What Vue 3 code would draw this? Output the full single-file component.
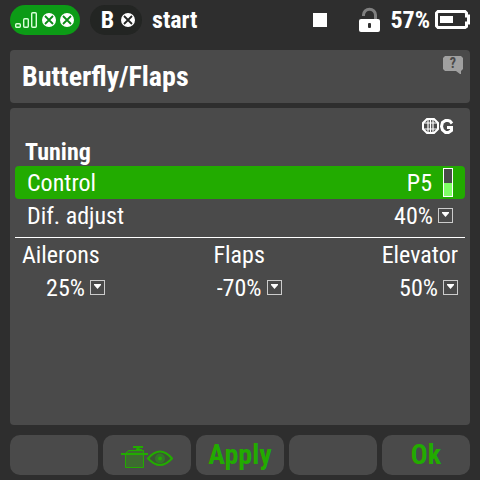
<script setup>
import { ref } from 'vue'

// Status bar values
const model = 'start'
const battery = '57%'

// Position of the P5 slider, in percent
const sliderLevel = ref(50)

// Differential adjustment
const difAdjust = ref('40%')

// One column per mixed function
const channels = ref([
  { id: 'ailerons', name: 'Ailerons', value: '25%' },
  { id: 'flaps', name: 'Flaps', value: '-70%' },
  { id: 'elevator', name: 'Elevator', value: '50%' }
])
</script>

<template>
  <div class="screen">
    <!-- Status bar -->
    <header class="status">
      <div class="pill link">
        <svg width="60" height="18" viewBox="0 0 60 18">
          <g fill="none" stroke="#d9ffd9" stroke-width="1.4">
            <rect x="0.7" y="12.7" width="4.6" height="3.6" rx="1" />
            <rect x="8.7" y="7.7" width="4.6" height="8.6" rx="1" />
            <rect x="16.7" y="1.7" width="4.6" height="14.6" rx="1" />
          </g>
          <g fill="#fff">
            <circle cx="34" cy="9" r="7" />
            <circle cx="52" cy="9" r="7" />
          </g>
          <path d="M30 5l8 8m0-8l-8 8M48 5l8 8m0-8l-8 8" stroke="#0c8b16" stroke-width="1.8" />
        </svg>
      </div>
      <div class="pill receiver">
        <span>B</span>
        <svg width="14" height="14" viewBox="0 0 14 14">
          <circle cx="7" cy="7" r="7" fill="#fff" />
          <path d="M3 3l8 8m0-8l-8 8" stroke="#232523" stroke-width="1.8" />
        </svg>
      </div>
      <span class="model">{{ model }}</span>
      <span class="stop"></span>
      <svg class="lock" width="22" height="26" viewBox="0 0 22 26">
        <path d="M4.5 9V8a6 5.8 0 0 1 12 0V13" fill="none" stroke="#808080" stroke-width="3" />
        <rect x="0" y="12" width="21" height="13" rx="2" fill="#fff" />
        <rect x="9" y="16" width="3" height="5" rx="1" fill="#2f2f2f" />
      </svg>
      <span class="battery-text">{{ battery }}</span>
      <svg width="35" height="20" viewBox="0 0 35 20">
        <path d="M3 1.5h27l1.5 1.500V6h2v7h-2v3.500L30 17.500H3L1.500 16V3z" fill="none" stroke="#fff" stroke-width="3" />
        <rect x="5" y="6" width="13" height="7" fill="#fff" />
      </svg>
    </header>

    <!-- Page title -->
    <section class="panel title">
      <h1>Butterfly/Flaps</h1>
      <button class="help" aria-label="Help">
        <svg width="20" height="18" viewBox="0 0 20 18">
          <path d="M2 0h16l2 2v11l-2 2v3h-1l-4-3H2l-2-2V2z" fill="#a0a0a0" />
          <text x="10" y="12" text-anchor="middle" class="mark">?</text>
        </svg>
      </button>
    </section>

    <!-- Settings -->
    <main class="panel settings">
      <div class="scope">
        <svg width="32" height="16" viewBox="0 0 32 16">
          <g fill="none" stroke="#fff">
            <path d="M5 1h7l4 4v6l-4 4H5l-4-4V5z" stroke-width="2" />
            <path d="M1 5h15M1 11h15M8.5 1v14M6 1v14M11 1v14" stroke-width="1.2" />
            <path d="M30 5.500L28 3L26 2.500H23.500L20.500 4.500L19.500 8.500L20.500 12L23.500 14.500H26.500L29.500 12.500V9.500H25" stroke-width="3" />
          </g>
        </svg>
      </div>
      <h2>Tuning</h2>
      <button class="row active">
        <span class="name">Control</span>
        <span class="value control-value">
          <span class="name">P5</span>
          <span class="slider"><span class="level" :style="{ height: sliderLevel + '%' }"></span></span>
        </span>
      </button>
      <div class="row">
        <label for="dif">Dif. adjust</label>
        <span class="value">
          <select id="dif" v-model="difAdjust">
            <option>{{ difAdjust }}</option>
          </select>
          <svg width="15" height="15" viewBox="0 0 15 15">
            <rect x="0.5" y="0.5" width="14" height="14" fill="none" stroke="#ccc" />
            <path d="M4 4h7v1l-3.5 4L4 5z" fill="#fff" />
          </svg>
        </span>
      </div>
      <hr />
      <div class="channels">
        <div v-for="channel in channels" :key="channel.id" class="channel">
          <label :for="channel.id">{{ channel.name }}</label>
          <span class="value">
            <select :id="channel.id" v-model="channel.value">
              <option>{{ channel.value }}</option>
            </select>
            <svg width="15" height="15" viewBox="0 0 15 15">
              <rect x="0.5" y="0.5" width="14" height="14" fill="none" stroke="#ccc" />
              <path d="M4 4h7v1l-3.5 4L4 5z" fill="#fff" />
            </svg>
          </span>
        </div>
      </div>
    </main>

    <!-- Function keys -->
    <footer class="keys">
      <button aria-label="Empty"></button>
      <button aria-label="Show servos">
        <svg width="52" height="24" viewBox="0 0 52 24">
          <path d="M4.5 21.5V7.5l3-3h15v17z" fill="#3d6b30" stroke="#22ab00" />
          <path d="M0 8h27M12 1h10M15 4h6" stroke="#22ab00" stroke-width="2" />
          <path d="M17 1v3" stroke="#22ab00" stroke-width="3" />
          <path d="M27 12.5q12-14 24 0q-12 13-24 0z" fill="#3d5535" stroke="#22ab00" stroke-width="2" />
          <circle cx="39" cy="12.5" r="5" fill="#34762a" />
          <circle cx="39" cy="12.5" r="2" fill="#22ab00" />
        </svg>
      </button>
      <button>Apply</button>
      <button aria-label="Empty"></button>
      <button>Ok</button>
    </footer>
  </div>
</template>

<style>
body {
  margin: 0;
  background: #2e2e2e;
}
</style>

<style scoped>
.screen {
  display: flex;
  flex-direction: column;
  box-sizing: border-box;
  min-height: 100vh;
  padding: 0 10px 5px;
  font-family: "Roboto Condensed", Roboto, sans-serif;
  font-size: 24px;
  line-height: 33px;
  color: #fff;
}

button,
select {
  margin: 0;
  padding: 0;
  border: none;
  background: none;
  color: inherit;
  font: inherit;
  cursor: pointer;
}

.status {
  display: flex;
  align-items: center;
  height: 40px;
  margin-bottom: 10px;
  font-weight: bold;
}

.pill {
  display: flex;
  align-items: center;
  justify-content: center;
  box-sizing: border-box;
  height: 30px;
  border-radius: 15px;
}

.link {
  width: 70px;
  background: #0c9b16;
}

.receiver {
  gap: 7px;
  width: 52px;
  margin: 0 10px;
  padding-left: 4px;
  background: #232523;
}

.model {
  flex: 1;
}

.stop {
  width: 14px;
  height: 14px;
  margin-right: 32px;
  background: #fff;
}

.lock {
  margin-right: 9px;
}

.battery-text {
  margin-right: 5px;
}

.panel {
  border-radius: 4px;
  background: #4a4a4a;
}

.title {
  display: flex;
  align-items: center;
  justify-content: space-between;
  height: 53px;
  margin-bottom: 5px;
  padding: 0 7px 0 12px;
}

h1,
h2 {
  margin: 0;
}

h1 {
  font-size: 28px;
}

.help {
  display: flex;
  align-self: flex-start;
  margin-top: 6px;
}

.mark {
  fill: #4a4a4a;
  font-size: 14px;
  font-weight: bold;
}

.settings {
  flex: 1;
  padding: 0 5px;
}

.scope {
  display: flex;
  justify-content: flex-end;
  box-sizing: border-box;
  height: 30px;
  padding: 10px 11px 0 0;
}

h2 {
  padding-left: 10px;
  font-size: 24px;
  line-height: 28px;
}

.row {
  display: flex;
  align-items: center;
  justify-content: space-between;
  box-sizing: border-box;
  width: 100%;
  height: 33px;
  padding: 0 12px;
}

.active {
  border-radius: 4px;
  background: #22ab00;
}

.value {
  display: flex;
  align-items: center;
  justify-content: flex-end;
  gap: 5px;
}

.control-value {
  gap: 11px;
}

.slider {
  display: flex;
  align-items: flex-end;
  box-sizing: border-box;
  width: 10px;
  height: 29px;
  border: 1px solid #fff;
  background: #4a4a4a;
}

.level {
  width: 100%;
  background: #80ff66;
}

select {
  appearance: none;
  field-sizing: content;
}

.name,
label,
select {
  padding-top: 2px;
  line-height: 31px;
}

hr {
  height: 1px;
  margin: 5px 0 0;
  border: none;
  background: #fff;
}

.channels {
  display: grid;
  grid-template-columns: 83px 1fr 1fr;
  padding: 0 7px;
}

.channel {
  display: flex;
  flex-direction: column;
  justify-self: end;
  min-width: 68px;
}

.channel:first-child {
  justify-self: stretch;
}

.keys {
  display: grid;
  grid-template-columns: repeat(5, 1fr);
  gap: 5px;
  height: 40px;
  margin-top: 10px;
}

.keys button {
  display: flex;
  align-items: center;
  justify-content: center;
  padding-bottom: 2px;
  border-radius: 10px;
  background: #4a4a4a;
  color: #22ab00;
  font-size: 28px;
  font-weight: bold;
}

.keys svg {
  margin-top: 8px;
}
</style>
